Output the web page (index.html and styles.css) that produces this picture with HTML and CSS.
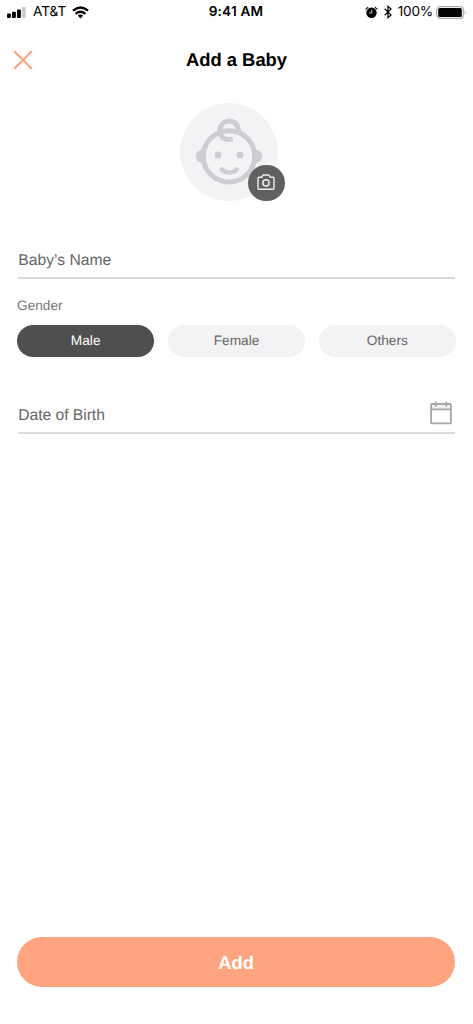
FILE: index.html
```
<!DOCTYPE html>
<html lang="en">
<head>
<meta charset="utf-8">
<title>Add a Baby</title>
<link rel="stylesheet" href="styles.css">
</head>
<body>
<div class="screen">
  <div class="status">
    <div class="status-left">
      <svg class="signal" width="19" height="12" viewBox="0 0 19 12"><rect x="0" y="6.5" width="3.9" height="4.5" rx="1"/><rect x="5" y="4.7" width="3.9" height="6.3" rx="1"/><rect x="10" y="2.4" width="3.9" height="8.6" rx="1"/><rect x="15" y="0" width="3.7" height="11" rx="1" fill="#cbcbcb"/></svg>
      <span class="carrier">AT&amp;T</span>
      <svg width="17" height="13" viewBox="0 0 17 13" fill="none" stroke="#000" stroke-width="2.4"><path d="M1 4.7Q8.5-1.8 16 4.7"/><path d="M3.6 7.8Q8.5 3.6 13.4 7.8"/><path d="M5.8 9.6Q8.5 7.5 11.2 9.6L8.5 12.4Z" fill="#000" stroke="none"/></svg>
    </div>
    <span class="time">9:41 AM</span>
    <div class="status-right">
      <svg class="alarm" width="13" height="13" viewBox="0 0 13 13"><circle cx="6.5" cy="6.8" r="5.2"/><path d="M.9 3.2 2.9 1.3M10.1 1.3 12.1 3.2" stroke="#000" stroke-width="1.1" stroke-linecap="round"/><path d="M6.7 3.8V7H4.2" fill="none" stroke="#fff" stroke-width=".8"/></svg>
      <svg class="bluetooth" width="8" height="14" viewBox="0 0 8 14" fill="none" stroke="#000" stroke-width="1.2"><path d="M.7 3.8 7 9.9 4 12.7V1.3L7 4.1.7 10.2"/></svg>
      <span class="percent">100%</span>
      <svg width="31" height="13" viewBox="0 0 31 13"><rect x=".7" y=".7" width="26.6" height="11.6" rx="3" fill="#fff" stroke="#adadad" stroke-width="1.2"/><rect x="2.2" y="2" width="23.6" height="9" rx="1.6"/><path d="M28.7 4.3Q30.6 6.5 28.7 8.7Z" fill="#adadad"/></svg>
    </div>
  </div>
  <header class="header">
    <svg class="close" width="20" height="20" viewBox="0 0 20 20"><path d="M1.8 1.8 18.2 18.2M18.2 1.8 1.8 18.2" stroke="#ffa47e" stroke-width="2" stroke-linecap="round"/></svg>
    <h1 class="title">Add a Baby</h1>
  </header>
  <div class="avatar">
    <svg class="face" width="98" height="98" viewBox="0 0 98 98" fill="none" stroke="#cdced3" stroke-width="5" stroke-linecap="round">
      <circle cx="49" cy="49" r="49" fill="#f3f3f5" stroke="none"/>
      <circle cx="49" cy="53.4" r="25.7"/>
      <path d="M23.5 46.4C13.2 46.4 13.2 60.2 23.5 60.2ZM74.5 46.4C84.8 46.4 84.8 60.2 74.5 60.2Z" fill="#cdced3" stroke="none"/>
      <path d="M58.4 28.2C58.5 21.8 54.2 18 49.1 18S39.6 22 39.8 28C40 34.2 45.2 37.4 50.5 36.3" stroke-width="5"/>
      <path d="M41.6 66.4C46 70.7 52.4 70.7 56.8 66.4" stroke-width="4.4"/>
      <circle cx="38" cy="52" r="3.5" fill="#cdced3" stroke="none"/><circle cx="60" cy="52" r="3.5" fill="#cdced3" stroke="none"/>
    </svg>
    <div class="camera">
      <svg width="18" height="17" viewBox="0 0 18 17" fill="none" stroke="#eee" stroke-width="1.4" stroke-linejoin="round"><path d="M2 3.2H4.8L6.2 1H11.8L13.2 3.2H16Q17 3.2 17 4.2V14.2Q17 15.2 16 15.2H2Q1 15.2 1 14.2V4.2Q1 3.2 2 3.2Z"/><circle cx="9" cy="8.9" r="3.1" stroke-width="1.5"/></svg>
    </div>
  </div>
  <div class="field name">Baby’s Name</div>
  <div class="label">Gender</div>
  <div class="options">
    <div class="option selected">Male</div>
    <div class="option">Female</div>
    <div class="option">Others</div>
  </div>
  <div class="field birth">
    <span>Date of Birth</span>
    <svg class="calendar" width="22" height="24" viewBox="0 0 22 24" fill="none" stroke="#a6a6a6" stroke-width="1.8"><path d="M1.5 3.2H20.5V8H1.5Z" fill="#f1f1f1" stroke="none"/><rect x="1.1" y="3" width="19.8" height="19.4" rx="1"/><path d="M1 8.3H21M5.7.8V5.6M16.3.8V5.6"/></svg>
  </div>
  <div class="add">Add</div>
</div>
</body>
</html>
```
FILE: styles.css
```
* { box-sizing: border-box; }
body { margin: 0; background: #fff; }
svg { display: block; flex: none; }
.screen {
  height: 1024px;
  padding: 0 18px 37px 17px;
  display: flex;
  flex-direction: column;
  font-family: "Liberation Sans", Arial, sans-serif;
  text-rendering: geometricPrecision;
  color: #666;
}
.status {
  height: 24px;
  margin: 0 -12px 0 -10px;
  display: grid;
  grid-template-columns: 1fr auto 1fr;
  align-items: center;
  font: 13.6px/24px Inter, sans-serif;
  color: #000;
}
.status-left, .status-right { display: flex; align-items: center; }
.status-left { gap: 7px; }
.status-left .carrier { width: 32px; letter-spacing: 0; }
.status-right { justify-content: flex-end; }
.signal { margin-top: 1px; }
.time { font-weight: 600; letter-spacing: 0.2px; margin-right: 2px; }
.alarm { margin-right: 6px; }
.bluetooth { margin-right: 6px; }
.percent { margin-right: 3px; letter-spacing: -0.2px; }
.header {
  height: 72px;
  margin: 0 -18px 0 -17px;
  padding: 0 13px;
  display: grid;
  grid-template-columns: 20px 1fr 20px;
  align-items: center;
}
.title {
  margin: 0;
  text-align: center;
  font-size: 18.4px;
  line-height: 24px;
  color: #000;
}
.avatar {
  position: relative;
  width: 98px;
  height: 98px;
  margin: 7px 0 0 162.5px;
}
.camera {
  position: absolute;
  left: 68.4px;
  top: 61.6px;
  width: 36.8px;
  height: 36.8px;
  border-radius: 50%;
  background: #606060;
  display: flex;
  align-items: center;
  justify-content: center;
}
.field {
  margin: 0 0 0 1px;
  font-size: 15.7px;
  line-height: 20px;
  border-bottom: 2px solid #dcdcdc;
}
.name { height: 28px; margin-top: 50px; padding-left: 0.3px; border-color: #d8d8dc; }
.label {
  margin-top: 17px;
  font-size: 13.7px;
  line-height: 20px;
  color: #777;
}
.options {
  margin: 9px -1px 0 0;
  display: grid;
  grid-template-columns: repeat(3, 1fr);
  gap: 13.5px;
}
.option {
  height: 32px;
  border-radius: 16px;
  background: #f3f3f5;
  font-size: 13.7px;
  line-height: 31px;
  text-align: center;
}
.selected { background: #4f4f4f; color: #fff; }
.birth {
  height: 33px;
  margin-top: 44px;
  padding-left: 0.3px;
  display: flex;
  justify-content: space-between;
}
.birth span { padding-top: 5px; letter-spacing: -0.05px; }
.calendar { margin-right: 3px; }
.add {
  height: 50px;
  margin-top: auto;
  border-radius: 25px;
  background: #ffa47e;
  color: #fff;
  font-size: 18.4px;
  font-weight: 700;
  line-height: 51px;
  text-align: center;
}
```
